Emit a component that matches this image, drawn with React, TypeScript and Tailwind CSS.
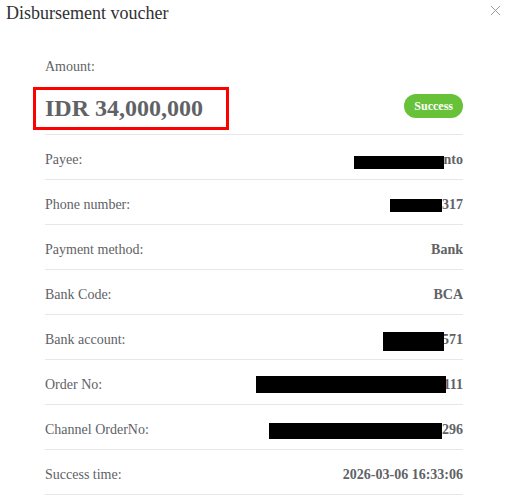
import React from 'react';

type Row = {
  label: string;
  value: string;
  mask?: { w: number; top: number; h: number; overlap?: boolean };
};

const ROWS: Row[] = [
  { label: 'Payee:', value: 'nto', mask: { w: 90, top: 6, h: 13 } },
  { label: 'Phone number:', value: '317', mask: { w: 52, top: 4, h: 13 } },
  { label: 'Payment method:', value: 'Bank' },
  { label: 'Bank Code:', value: 'BCA' },
  { label: 'Bank account:', value: '571', mask: { w: 61, top: 2, h: 19, overlap: true } },
  { label: 'Order No:', value: '111', mask: { w: 190, top: 1, h: 17, overlap: true } },
  { label: 'Channel OrderNo:', value: '296', mask: { w: 173, top: 3, h: 16 } },
  { label: 'Success time:', value: '2026-03-06 16:33:06' },
];

export default function App() {
  return (
    <div className="h-[499px] w-[511px] overflow-hidden bg-white font-['Liberation_Serif'] text-[#606266]">
      <div className="flex items-start justify-between pl-[6px] pr-[10px] pt-[1px]">
        <h1 className="text-[18px] leading-6 text-[#303133]">Disbursement voucher</h1>
        <svg className="mt-[4px] h-[11px] w-[11px] text-[#909399]" viewBox="0 0 12 12" fill="none" stroke="currentColor" strokeWidth="1">
          <path d="M1 1l10 10M11 1L1 11" />
        </svg>
      </div>

      <div className="pl-[45px] pr-[48px] pt-[32px]">
        <p className="text-[14px] leading-5">Amount:</p>
        <div className="mt-[15px] flex items-start justify-between border-b border-[#e4e7ed] pb-[10px]">
          <div className="relative">
            <span className="text-[24px] font-bold leading-8">IDR 34,000,000</span>
            <div className="absolute left-[-12px] top-[-5px] h-[43px] w-[196px] border-[3px] border-[#ff0000]" />
          </div>
          <span className="mt-[2px] rounded-full bg-[#67c23a] px-[10px] text-[12px] font-bold leading-6 text-white">Success</span>
        </div>

        {ROWS.map((row) => (
          <div key={row.label} className="flex justify-between border-b border-[#e4e7ed] pb-[9px] pt-[15px] text-[14px] leading-5">
            <span>{row.label}</span>
            <span className="relative font-bold">
              {row.mask && (
                <span
                  className={`absolute block bg-black ${row.mask.overlap ? 'right-[calc(100%-2px)]' : 'right-full'}`}
                  style={{ width: row.mask.w, top: row.mask.top, height: row.mask.h }}
                />
              )}
              {row.value}
            </span>
          </div>
        ))}
      </div>
    </div>
  );
}
